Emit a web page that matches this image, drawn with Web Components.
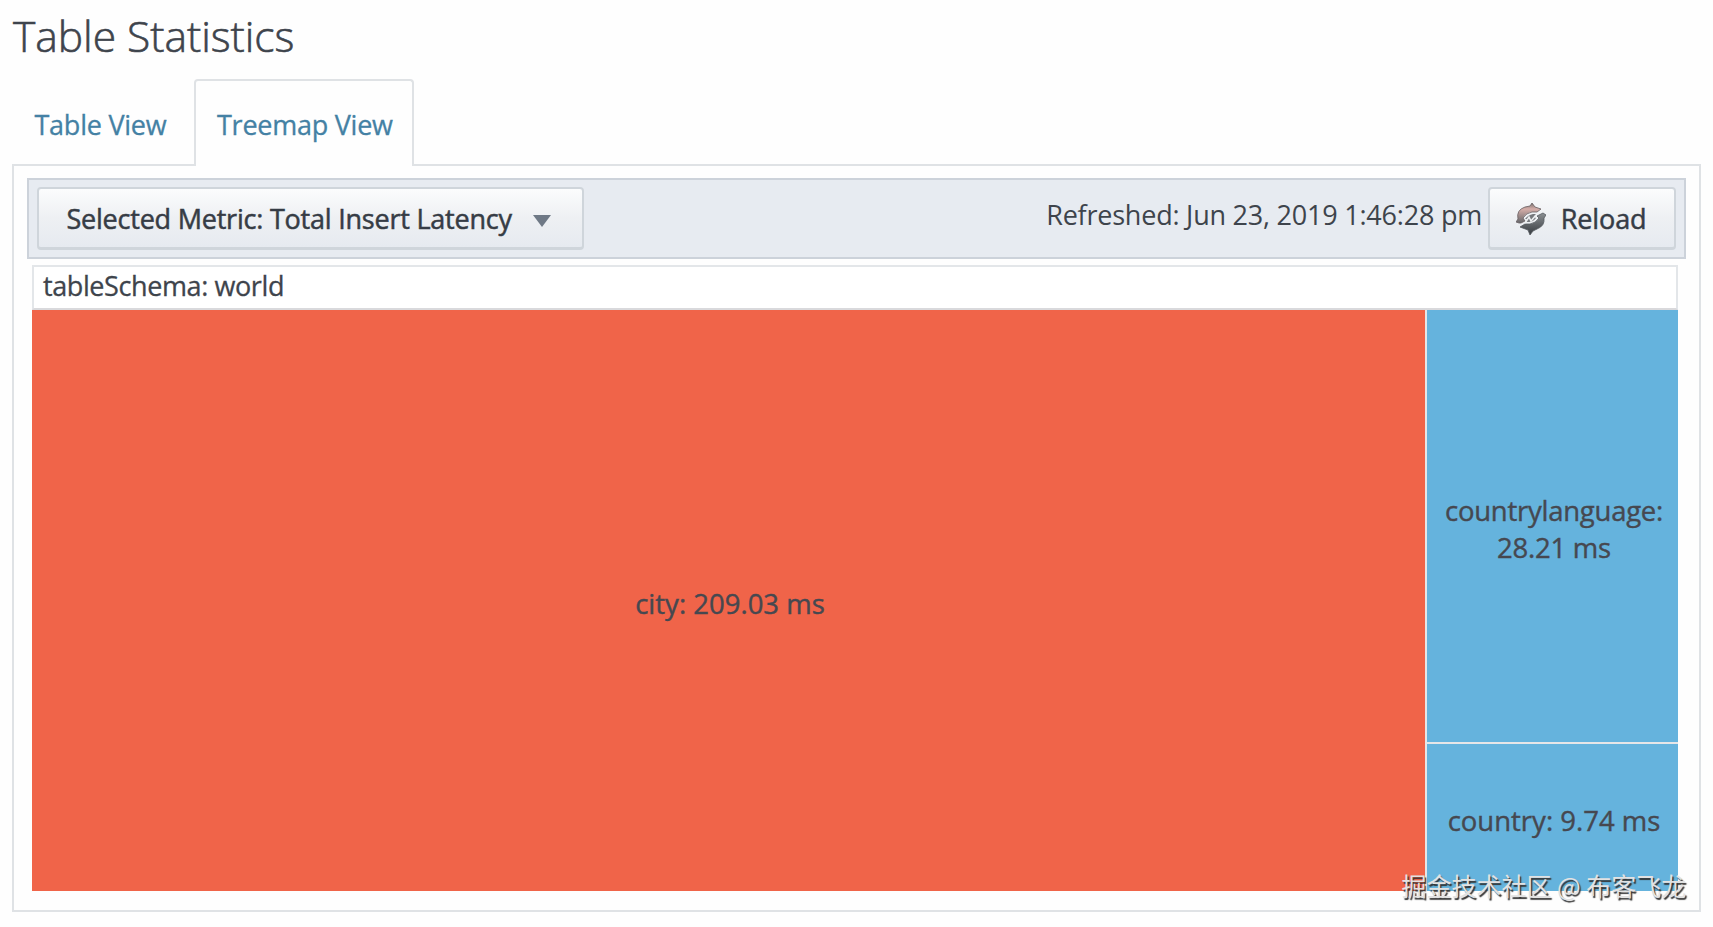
<!DOCTYPE html>
<html lang="en">
<head>
<meta charset="utf-8">
<title>Table Statistics</title>
<style>
  body {
    margin: 0;
    height: 927px;
    overflow: hidden;
    background: #fefefe;
    font-family: "Open Sans", "Noto Sans CJK SC", sans-serif;
    --color-text: #3e444c;
    --color-link: #4481a4;
    --color-border: #dfe2e5;
    --color-bar-border: #ccd2da;
    --color-bar: #e7ebf1;
  }

  .large {
    letter-spacing: -0.25px;
  }
</style>
</head>
<body>
<stats-page heading="Table Statistics">
  <tab-item slot="tabs">Table View</tab-item>
  <tab-item slot="tabs" active>Treemap View</tab-item>
  <tool-bar>
    <tool-button class="metric">Selected Metric: Total Insert Latency<drop-arrow slot="after"></drop-arrow></tool-button>
    <span slot="end">Refreshed: Jun 23, 2019 1:46:28 pm</span>
    <tool-button slot="end" compact><reload-icon slot="before"></reload-icon>Reload</tool-button>
  </tool-bar>
  <tree-map label="tableSchema: world">
    <tree-tile slot="main" color="#f06449">city: 209.03 ms</tree-tile>
    <tree-tile class="large" color="#65b3dd">countrylanguage:<br>28.21 ms</tree-tile>
    <tree-tile color="#65b3dd">country: 9.74 ms</tree-tile>
  </tree-map>
</stats-page>
<water-mark>掘金技术社区 @ 布客飞龙</water-mark>

<script>
function attach(el, html) {
  const template = document.createElement('template');
  template.innerHTML = html;
  el.attachShadow({mode: 'open'});
  el.shadowRoot.appendChild(template.content.cloneNode(true));
}

class StatsPage extends HTMLElement {
  constructor() {
    super();
    attach(this, `
<style>
  :host {
    display: block;
    padding: 0 12px;
    color: var(--color-text);
  }

  h1 {
    margin: 0 0 9px;
    padding-left: 1px;
    font-size: 42.6px;
    font-weight: 300;
    line-height: 70px;
    letter-spacing: -0.05px;
    white-space: nowrap;
    -webkit-text-stroke: 0.6px;
  }

  nav {
    display: flex;
    height: 85px;
  }

  .panel {
    box-sizing: border-box;
    height: 748px;
    padding: 12px 13px;
    border: 2px solid var(--color-border);
  }
</style>
<h1></h1>
<nav><slot name="tabs"></slot></nav>
<div class="panel"><slot></slot></div>`);
  }

  connectedCallback() {
    this.shadowRoot.querySelector('h1').textContent = this.getAttribute('heading');
  }
}

class TabItem extends HTMLElement {
  constructor() {
    super();
    attach(this, `
<style>
  :host {
    display: block;
    box-sizing: border-box;
    width: 182px;
    height: 85px;
    padding: 28px 0 0 22.5px;
    color: var(--color-link);
    font-size: 27px;
    line-height: 36px;
    letter-spacing: -0.25px;
    white-space: nowrap;
    -webkit-text-stroke: 0.3px;
  }

  /* the open tab covers the top line of the panel */
  :host([active]) {
    position: relative;
    width: 220px;
    height: 87px;
    padding: 26px 0 0 21px;
    border: 2px solid var(--color-border);
    border-bottom: 0;
    border-radius: 4px 4px 0 0;
    background: #fefefe;
  }
</style>
<slot></slot>`);
  }
}

class ToolBar extends HTMLElement {
  constructor() {
    super();
    attach(this, `
<style>
  :host {
    display: flex;
    box-sizing: border-box;
    justify-content: space-between;
    height: 81px;
    padding: 7px 8px;
    border: 2px solid var(--color-bar-border);
    background: var(--color-bar);
    font-size: 27px;
    letter-spacing: -0.22px;
    white-space: nowrap;
  }

  .end {
    display: flex;
    gap: 6px;
    line-height: 56px;
  }
</style>
<slot></slot>
<div class="end"><slot name="end"></slot></div>`);
  }
}

class ToolButton extends HTMLElement {
  constructor() {
    super();
    attach(this, `
<style>
  :host {
    display: flex;
    box-sizing: border-box;
    align-items: center;
    width: 547px;
    height: 63px;
    padding: 2px 31px 0 27.5px;
    justify-content: space-between;
    border: 2px solid #cfd5db;
    border-bottom-width: 3px;
    border-radius: 4px;
    background: linear-gradient(#fbfcfd, #eef0f3 50%, #e6eaf0);
    color: #363c45;
    line-height: 36px;
    -webkit-text-stroke: 0.5px;
  }

  :host([compact]) {
    width: 188px;
    padding: 2px 27.5px 0 26px;
    letter-spacing: -0.1px;
  }
</style>
<slot name="before"></slot><span><slot></slot></span><slot name="after"></slot>`);
  }
}

class DropArrow extends HTMLElement {
  constructor() {
    super();
    attach(this, `
<style>
  :host {
    display: block;
    width: 18px;
    height: 12px;
    margin-top: 3px;
  }

  svg {
    display: block;
  }
</style>
<svg width="18" height="12" viewBox="0 0 18 12"><path d="M0 0h18L9 12z" fill="#6f7986"/></svg>`);
  }
}

class ReloadIcon extends HTMLElement {
  constructor() {
    super();
    attach(this, `
<style>
  :host {
    display: block;
    width: 30px;
    height: 32px;
  }

  svg {
    display: block;
  }
</style>
<svg width="30" height="32" viewBox="0 0 30 32">
  <defs>
    <linearGradient id="top" x1="0" y1="0" x2="0" y2="1">
      <stop offset="0" stop-color="#77706f"/>
      <stop offset=".3" stop-color="#d6aea9"/>
      <stop offset=".6" stop-color="#a58f8d"/>
      <stop offset="1" stop-color="#64676b"/>
    </linearGradient>
    <linearGradient id="low" x1="0" y1="0" x2="0" y2="1">
      <stop offset="0" stop-color="#8b8f92"/>
      <stop offset="1" stop-color="#373b40"/>
    </linearGradient>
  </defs>
  <path d="M3 20L0 19L2 16Q0 7 9 4L14 3L16 0L19 4L25 6L21 9L16 9Q10 10 7 15L9 18L5 20Z" fill="url(#top)" stroke="#686062" stroke-width=".8"/>
  <path d="M27 10L30 12L28 15Q29 23 21 26L17 28L14 32L12 27L4 24L9 21L14 21Q20 20 23 15L21 13L25 11Z" fill="url(#low)" stroke="#555a5f" stroke-width=".8"/>
  <path d="M9 16Q12 12 17 11L20 11L18 14L20 15Q17 19 13 19L10 19L11 16Z" fill="#76797d"/>
  <path d="M9 20L13 14L15 18L20 12" fill="none" stroke="#eceef0" stroke-width="1.600"/>
</svg>`);
  }
}

class TreeMap extends HTMLElement {
  constructor() {
    super();
    attach(this, `
<style>
  :host {
    display: block;
    margin: 6px 8px 0 5px;
  }

  header {
    box-sizing: border-box;
    height: 45px;
    padding-left: 9px;
    border: 2px solid #e3e6e9;
    border-bottom-color: #d9d9dc;
    background: #fff;
    font-size: 27px;
    line-height: 38px;
    letter-spacing: -0.4px;
    -webkit-text-stroke: 0.3px;
  }

  .tiles {
    display: grid;
    grid-template-columns: 1fr 251px;
    gap: 2px;
    height: 581px;
    background: #e6e6e8;
  }

  .side {
    display: grid;
    grid-template-rows: 432px 1fr;
    gap: 2px;
  }
</style>
<header></header>
<div class="tiles">
  <slot name="main"></slot>
  <div class="side"><slot></slot></div>
</div>`);
  }

  connectedCallback() {
    this.shadowRoot.querySelector('header').textContent = this.getAttribute('label');
  }
}

class TreeTile extends HTMLElement {
  constructor() {
    super();
    attach(this, `
<style>
  :host {
    display: flex;
    align-items: center;
    justify-content: center;
    padding: 7px 0 0 3px;
    color: #464850;
    font-size: 27.5px;
    line-height: 36.5px;
    text-align: center;
    white-space: nowrap;
    -webkit-text-stroke: 0.4px;
  }
</style>
<div><slot></slot></div>`);
  }

  connectedCallback() {
    this.style.backgroundColor = this.getAttribute('color');
  }
}

class WaterMark extends HTMLElement {
  constructor() {
    super();
    attach(this, `
<style>
  :host {
    position: absolute;
    left: 1401.5px;
    top: 867px;
    color: #e2e2e2;
    font: 25px/36px "Noto Sans CJK SC", sans-serif;
    text-shadow: 1.5px 1.5px 1px #333;
    white-space: nowrap;
  }
</style>
<slot></slot>`);
  }
}

customElements.define('stats-page', StatsPage);
customElements.define('tab-item', TabItem);
customElements.define('tool-bar', ToolBar);
customElements.define('tool-button', ToolButton);
customElements.define('drop-arrow', DropArrow);
customElements.define('reload-icon', ReloadIcon);
customElements.define('tree-map', TreeMap);
customElements.define('tree-tile', TreeTile);
customElements.define('water-mark', WaterMark);
</script>
</body>
</html>
